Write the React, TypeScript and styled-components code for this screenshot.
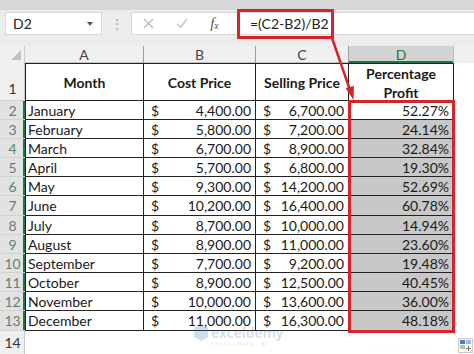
import React from 'react'
import styled, { createGlobalStyle } from 'styled-components'

const GlobalStyle = createGlobalStyle`
	html, body {
		margin: 0;
		padding: 0;
		background: #fff;
	}
	body {
		font-family: Lato, 'Liberation Sans', sans-serif;
		overflow: hidden;
	}
`

const RED = '#d7232b'
const GREEN = '#217346'
const COLS = [119, 112, 93, 105] // A..D

const rows = [
	['January', '4,400.00', '6,700.00', '52.27%'],
	['February', '5,800.00', '7,200.00', '24.14%'],
	['March', '6,700.00', '8,900.00', '32.84%'],
	['April', '5,700.00', '6,800.00', '19.30%'],
	['May', '9,300.00', '14,200.00', '52.69%'],
	['June', '10,200.00', '16,400.00', '60.78%'],
	['July', '8,700.00', '10,000.00', '14.94%'],
	['August', '8,900.00', '11,000.00', '23.60%'],
	['September', '7,700.00', '9,200.00', '19.48%'],
	['October', '8,900.00', '12,500.00', '40.45%'],
	['November', '10,000.00', '13,600.00', '36.00%'],
	['December', '11,000.00', '16,300.00', '48.18%'],
]

const Page = styled.div`
	position: relative;
	width: 474px;
	height: 354px;
	overflow: hidden;
	background: #fff;
	color: #1a1a1a;
`

const TopStrip = styled.div`
	height: 10px;
	background: #d8d8d8;
`

const Toolbar = styled.div`
	display: flex;
	align-items: flex-start;
	height: 36px;
	box-sizing: border-box;
	padding: 2px 0 0 5px;
	background: #ececec;
`

const NameBox = styled.div`
	display: flex;
	align-items: center;
	justify-content: space-between;
	width: 97px;
	height: 23px;
	box-sizing: border-box;
	padding: 0 8px 0 7px;
	background: #fff;
	border: 1px solid #d8d8d8;
	font-size: 14px;
	color: #222;
`

const Caret = styled.span`
	width: 0;
	height: 0;
	border-left: 3.5px solid transparent;
	border-right: 3.5px solid transparent;
	border-top: 4px solid #555;
`

const Dots = styled.div`
	width: 29px;
	line-height: 23px;
	text-align: center;
	font-size: 14px;
	color: #b0b0b0;
`

const FormulaInput = styled.div`
	display: flex;
	align-items: center;
	flex: 1;
	height: 23px;
	background: #fff;
	border: 1px solid #d8d8d8;
	border-right: none;
	box-sizing: border-box;
`

const IconSlot = styled.div`
	display: flex;
	align-items: center;
	justify-content: center;
	width: 33px;
	height: 21px;
	flex: none;
`

const Fx = styled.span`
	font-family: 'Liberation Serif', serif;
	font-style: italic;
	font-size: 15px;
	color: #555;

	sub {
		font-size: 10px;
		vertical-align: -1px;
	}
`

const FormulaBox = styled.div`
	display: flex;
	align-items: center;
	flex: none;
	width: 97px;
	height: 30px;
	margin-left: 6px;
	box-sizing: border-box;
	padding-left: 10px;
	border: 3px solid ${RED};
	font-size: 14px;
	color: #222;
`

const Row = styled.div<{ $h: number }>`
	display: flex;
	height: ${p => p.$h}px;
`

const HeaderRow = styled(Row)`
	background: #f0f0f0;
`

const Corner = styled.div`
	display: flex;
	align-items: flex-end;
	justify-content: flex-end;
	width: 25px;
	box-sizing: border-box;
	padding: 0 3px 3px 0;
	border-right: 1px solid #c8c8c8;

	&::after {
		content: '';
		width: 0;
		height: 0;
		border-left: 10px solid transparent;
		border-bottom: 10px solid #c2c2c2;
	}
`

const ColHead = styled.div<{ $w: number; $active?: boolean }>`
	width: ${p => p.$w}px;
	flex: none;
	box-sizing: border-box;
	text-align: center;
	font-size: 14px;
	line-height: 17px;
	color: ${p => (p.$active ? GREEN : '#444')};
	background: ${p => (p.$active ? '#d3d3d3' : 'transparent')};
	border-right: 1px solid ${p => (p.$active ? '#bdbdbd' : '#9a9a9a')};
	box-shadow: ${p => (p.$active ? `inset 0 -2px 0 ${GREEN}` : 'inset 0 -1px 0 #c4c4c4')};
`

const RowHead = styled.div<{ $sel?: boolean; $bottom?: boolean }>`
	display: flex;
	align-items: ${p => (p.$bottom ? 'flex-end' : 'center')};
	justify-content: center;
	width: 25px;
	flex: none;
	box-sizing: border-box;
	font-size: 14px;
	color: ${p => (p.$sel ? '#63806c' : '#333')};
	background: ${p => (p.$sel ? '#e2e2e2' : '#efefef')};
	border-bottom: 1px solid #d2d2d2;
	box-shadow: ${p => (p.$sel ? `inset -2px 0 0 ${GREEN}` : 'inset -1px 0 0 #c8c8c8')};
	padding-bottom: ${p => (p.$bottom ? '3px' : '0')};
`

const Cell = styled.div<{ $w: number; $top?: boolean; $first?: boolean }>`
	display: flex;
	align-items: center;
	width: ${p => p.$w}px;
	flex: none;
	box-sizing: border-box;
	font-size: 14px;
	border-right: 1px solid #222;
	border-bottom: 1px solid #222;
	border-top: ${p => (p.$top ? '1px solid #222' : 'none')};
	border-left: ${p => (p.$first ? '1px solid #222' : 'none')};
`

const HeadCell = styled(Cell)`
	justify-content: center;
	text-align: center;
	font-weight: 700;
	line-height: 19px;
	padding-top: 1px;
`

const TextCell = styled(Cell)`
	padding-left: 2px;
`

const MoneyCell = styled(Cell)`
	justify-content: space-between;
	padding: 0 4px 0 7px;
`

const PctCell = styled(Cell)<{ $fill?: boolean }>`
	justify-content: flex-end;
	padding-right: 4px;
	background: ${p => (p.$fill ? '#c8c8c8' : '#fff')};
`

const Blank = styled.div`
	flex: 1;
	display: flex;
	align-items: flex-end;
	justify-content: flex-end;
`

const PasteIcon = styled.div`
	width: 15px;
	height: 15px;
	margin: 0 1px 2px 0;
	box-sizing: border-box;
	border: 1px solid #c9c9c9;
	background: #fafafa;
	display: flex;
	align-items: center;
	justify-content: center;
`

const RangeMarker = styled.div`
	position: absolute;
	left: 348px;
	top: 100px;
	width: 107px;
	height: 233px;
	box-sizing: border-box;
	border: 3px solid ${RED};
	pointer-events: none;
`

const Arrow = styled.svg`
	position: absolute;
	left: 0;
	top: 0;
	pointer-events: none;
`

const Watermark = styled.div`
	position: absolute;
	left: 193px;
	top: 324px;
	display: flex;
	align-items: flex-start;
	gap: 2px;
	opacity: 0.25;
	color: #4d78b8;
	pointer-events: none;
`

const WmText = styled.div`
	display: flex;
	flex-direction: column;
	line-height: 1;
	padding-top: 2px;

	b {
		font-family: 'Open Sans', sans-serif;
		font-size: 14px;
		font-weight: 600;
	}
	small {
		font-size: 5px;
		letter-spacing: 1px;
		margin-top: 2px;
		color: #7f8fa8;
	}
`

const Money: React.FC<{ w: number; v: string }> = ({ w, v }) => (
	<MoneyCell $w={w}>
		<span>$</span>
		<span>{v}</span>
	</MoneyCell>
)

export default function App() {
	return (
		<Page>
			<GlobalStyle />
			<TopStrip />
			<Toolbar>
				<NameBox>
					D2
					<Caret />
				</NameBox>
				<Dots>⋮</Dots>
				<FormulaInput>
					<IconSlot>
						<svg width="11" height="11" viewBox="0 0 11 11">
							<path d="M1 1L10 10M10 1L1 10" stroke="#bcbcbc" strokeWidth="1.4" fill="none" />
						</svg>
					</IconSlot>
					<IconSlot>
						<svg width="12" height="11" viewBox="0 0 12 11">
							<path d="M1 6L4.5 9.5L11 1" stroke="#c4c4c4" strokeWidth="1.4" fill="none" />
						</svg>
					</IconSlot>
					<IconSlot>
						<Fx>
							f<sub>x</sub>
						</Fx>
					</IconSlot>
					<FormulaBox>=(C2-B2)/B2</FormulaBox>
				</FormulaInput>
			</Toolbar>

			<HeaderRow $h={17}>
				<Corner />
				{['A', 'B', 'C', 'D'].map((c, i) => (
					<ColHead key={c} $w={COLS[i]} $active={c === 'D'}>
						{c}
					</ColHead>
				))}
			</HeaderRow>

			<Row $h={38}>
				<RowHead $bottom>1</RowHead>
				<HeadCell $w={COLS[0]} $top $first>Month</HeadCell>
				<HeadCell $w={COLS[1]} $top>Cost Price</HeadCell>
				<HeadCell $w={COLS[2]} $top>Selling Price</HeadCell>
				<HeadCell $w={COLS[3]} $top>
					Percentage
					<br />
					Profit
				</HeadCell>
			</Row>

			{rows.map(([m, cost, sell, pct], i) => (
				<Row $h={i % 6 === 5 ? 20 : 19} key={m}>
					<RowHead $sel>{i + 2}</RowHead>
					<TextCell $w={COLS[0]} $first>{m}</TextCell>
					<Money w={COLS[1]} v={cost} />
					<Money w={COLS[2]} v={sell} />
					<PctCell $w={COLS[3]} $fill={i > 0}>{pct}</PctCell>
				</Row>
			))}

			<Row $h={24}>
				<RowHead $bottom>14</RowHead>
				<Blank>
					<PasteIcon>
						<svg width="11" height="11" viewBox="0 0 11 11">
							<rect x="0" y="0" width="5" height="4" fill="#4a7fc4" />
							<rect x="6" y="0" width="5" height="4" fill="#9bb8de" />
							<rect x="0" y="5" width="5" height="4" fill="#b9b9b9" />
							<path d="M8.5 6v5M6 8.5h5" stroke="#777" strokeWidth="1" />
						</svg>
					</PasteIcon>
				</Blank>
			</Row>

			<RangeMarker />
			<Arrow width="474" height="354" viewBox="0 0 474 354">
				<line x1="332" y1="38" x2="350" y2="90" stroke={RED} strokeWidth="2.5" />
				<polygon points="353.5,100 345.5,88 354,86" fill={RED} />
			</Arrow>

			<Watermark>
				<svg width="16" height="18" viewBox="0 0 16 18">
					<path d="M1 4L8 1L15 4V13L8 17L1 13Z" fill="#4d78b8" />
				</svg>
				<WmText>
					<b>exceldemy</b>
					<small>EXCEL · DATA · BI</small>
				</WmText>
			</Watermark>
		</Page>
	)
}
